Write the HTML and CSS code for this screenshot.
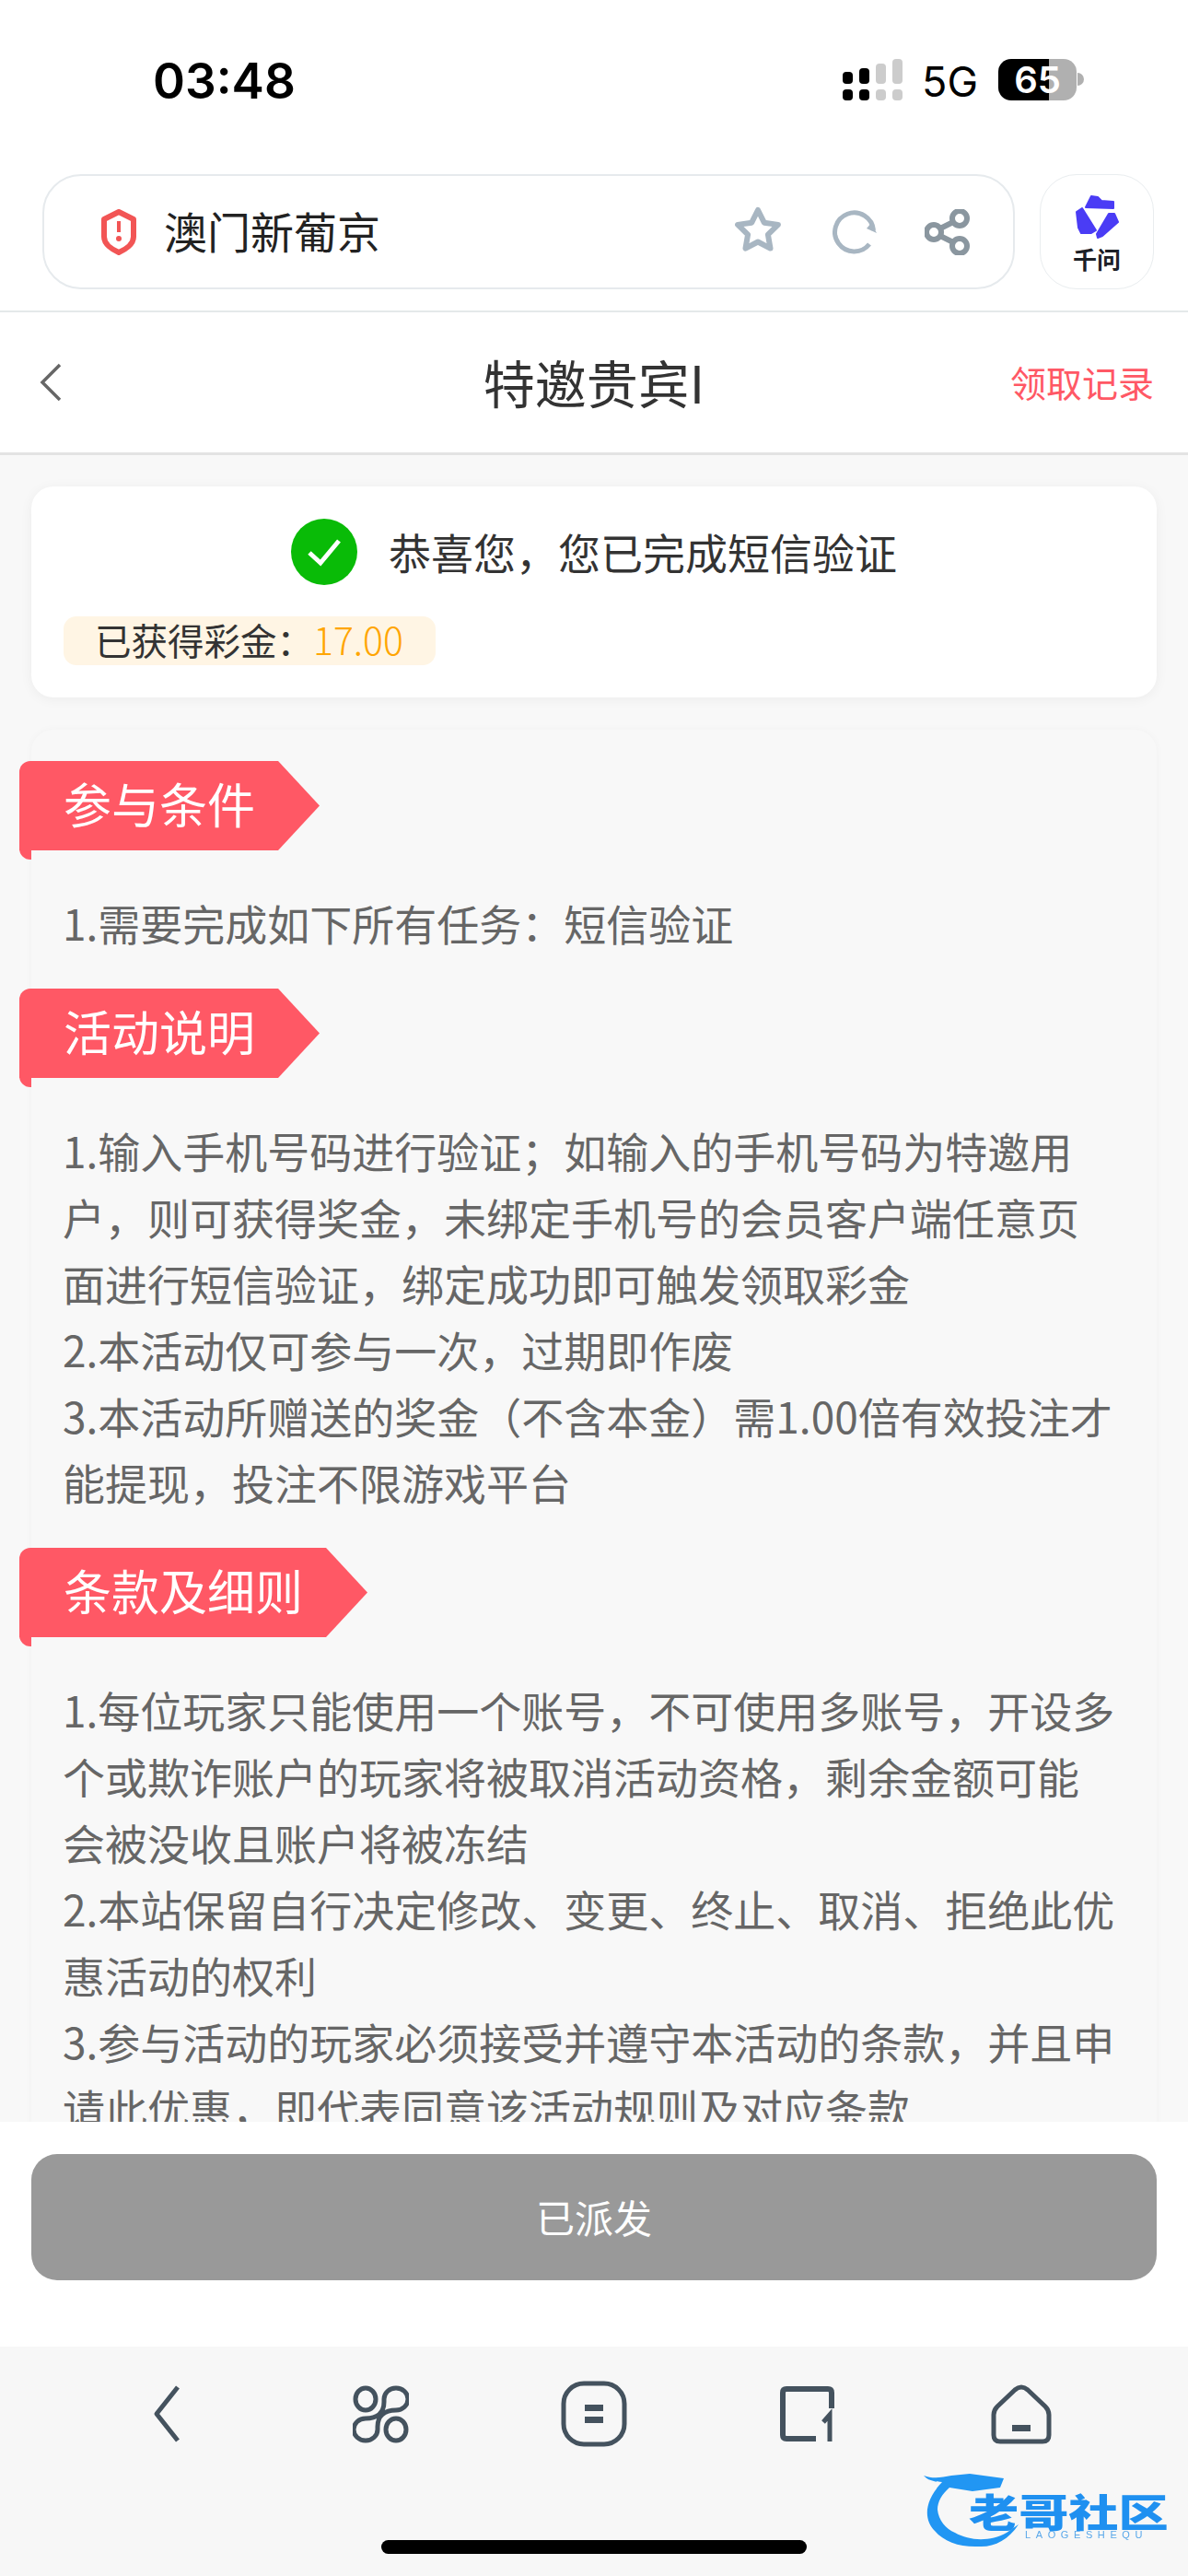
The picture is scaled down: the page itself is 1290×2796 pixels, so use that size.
FILE: index.html
```html
<!DOCTYPE html>
<html lang="zh-CN">
<head>
	<meta charset="utf-8">
	<title>特邀贵宾I</title>
	<link rel="stylesheet" href="styles.css">
</head>
<body>
	<!-- status bar -->
	<div class="status">
		<span class="time">03:48</span>
		<div class="status-right">
			<div class="signal">
				<div class="bar on"><i class="h1"></i><b></b></div>
				<div class="bar on"><i class="h2"></i><b></b></div>
				<div class="bar"><i class="h3"></i><b></b></div>
				<div class="bar"><i class="h4"></i><b></b></div>
			</div>
			<span class="net">5G</span>
			<div class="battery"><span>65</span></div>
			<div class="battery-nub"></div>
		</div>
	</div>

	<!-- browser bar -->
	<div class="browser">
		<div class="address">
			<svg class="shield" width="40" height="50" viewBox="0 0 40 50">
				<path d="M20 3 L36 11 V30 C36 38 27 44 20 47 C13 44 4 38 4 30 V11 Z" fill="none" stroke="#f25555" stroke-width="6" stroke-linejoin="round"/>
				<rect x="18" y="13" width="4" height="12" fill="#f25555"/>
				<circle cx="20" cy="32" r="3" fill="#f25555"/>
			</svg>
			<span class="site">澳门新葡京</span>
			<svg class="star" width="56" height="52" viewBox="0 0 56 52">
				<polygon points="28,4 34.8,17.7 49.9,19.9 38.9,30.6 41.5,45.6 28,38.5 14.5,45.6 17.1,30.6 6.1,19.9 21.2,17.7" fill="none" stroke="#a8b6c2" stroke-width="6" stroke-linejoin="round"/>
			</svg>
			<svg class="reload" width="48" height="48" viewBox="0 0 48 48">
				<path d="M40 37 A21 21 0 1 1 44.5 22" fill="none" stroke="#a8b6c2" stroke-width="5"/>
				<path d="M37 20 L42 14 L48 25 Z" fill="#a8b6c2"/>
			</svg>
			<svg class="share" width="50" height="50" viewBox="0 0 50 50">
				<g fill="none" stroke="#8a969f" stroke-width="6">
					<circle cx="10" cy="25" r="8"/>
					<circle cx="38" cy="10" r="8"/>
					<circle cx="38" cy="40" r="8"/>
					<path d="M17 21 L31 14 M17 29 L31 36"/>
				</g>
			</svg>
		</div>
		<div class="qianwen">
			<svg width="48" height="47" viewBox="0 0 48 47">
				<g fill="#4a3cf5" stroke="#4a3cf5" stroke-width="2" stroke-linejoin="round">
					<polygon points="12,13 18,1 25,2 29,6 42,7 42,14"/>
					<polygon points="2,18 8,14 23,38 18,41 7,41 4,35"/>
					<polygon points="37,20 43,20 47,29 30,44 25,46 24,42"/>
				</g>
			</svg>
			<span>千问</span>
		</div>
	</div>

	<!-- page header -->
	<div class="nav">
		<svg class="nav-back" width="24" height="42" viewBox="0 0 24 42">
			<path d="M22 2 L3 21 L22 40" fill="none" stroke="#666" stroke-width="3.5"/>
		</svg>
		<span class="nav-title">特邀贵宾I</span>
		<span class="nav-link">领取记录</span>
	</div>

	<div class="main">
		<div class="result">
			<div class="result-head">
				<svg width="72" height="72" viewBox="0 0 72 72">
					<circle cx="36" cy="36" r="36" fill="#09bb07"/>
					<path d="M20 37 L32 48 L52 24" fill="none" stroke="#fff" stroke-width="5"/>
				</svg>
				<span>恭喜您，您已完成短信验证</span>
			</div>
			<div class="bonus">已获得彩金：<em>17.00</em></div>
		</div>

		<div class="rules">
			<div class="tag"><span>参与条件</span></div>
			<div class="rule-text">1.需要完成如下所有任务：短信验证</div>

			<div class="tag"><span>活动说明</span></div>
			<div class="rule-text">
				<p>1.输入手机号码进行验证；如输入的手机号码为特邀用户，则可获得奖金，未绑定手机号的会员客户端任意页面进行短信验证，绑定成功即可触发领取彩金</p>
				<p>2.本活动仅可参与一次，过期即作废</p>
				<p>3.本活动所赠送的奖金（不含本金）需1.00倍有效投注才能提现，投注不限游戏平台</p>
			</div>

			<div class="tag"><span>条款及细则</span></div>
			<div class="rule-text">
				<p>1.每位玩家只能使用一个账号，不可使用多账号，开设多个或欺诈账户的玩家将被取消活动资格，剩余金额可能会被没收且账户将被冻结</p>
				<p>2.本站保留自行决定修改、变更、终止、取消、拒绝此优惠活动的权利</p>
				<p>3.参与活动的玩家必须接受并遵守本活动的条款，并且申请此优惠，即代表同意该活动规则及对应条款</p>
			</div>
		</div>
	</div>

	<!-- button panel -->
	<div class="action">
		<div class="action-btn">已派发</div>
	</div>

	<!-- browser toolbar -->
	<div class="toolbar">
		<div class="tools">
			<svg width="30" height="62" viewBox="0 0 30 62">
				<path d="M27 2 L4 31 L27 60" fill="none" stroke="#44525e" stroke-width="5" stroke-linejoin="round"/>
			</svg>
			<svg width="61" height="63" viewBox="0 0 61 63">
				<g fill="none" stroke="#44525e" stroke-width="5">
					<ellipse cx="14" cy="15" rx="11" ry="12"/>
					<ellipse cx="47" cy="48" rx="11" ry="12"/>
					<path d="M14 36 C26 36 34 30 34 18 L34 15 A13 12 0 1 1 47 27 C35 27 27 33 27 45 L27 48 A13 12 0 1 1 14 36 Z"/>
				</g>
			</svg>
			<svg width="72" height="72" viewBox="0 0 72 72">
				<rect x="3" y="3" width="66" height="66" rx="22" fill="none" stroke="#44525e" stroke-width="5"/>
				<rect x="26" y="26" width="20" height="7" fill="#44525e"/>
				<rect x="26" y="39" width="20" height="7" fill="#44525e"/>
			</svg>
			<svg width="60" height="60" viewBox="0 0 60 60">
				<path d="M56 24 V7 Q56 3 52 3 H7 Q3 3 3 7 V53 Q3 57 7 57 H39" fill="none" stroke="#44525e" stroke-width="6"/>
				<path d="M47 39 L54 31 V60" fill="none" stroke="#44525e" stroke-width="5"/>
			</svg>
			<svg width="66" height="65" viewBox="0 0 66 65">
				<path d="M26 6 L7 24 Q3 28 3 33 V55 Q3 62 10 62 H56 Q63 62 63 55 V33 Q63 28 59 24 L40 6 Q33 0 26 6 Z" fill="none" stroke="#44525e" stroke-width="5"/>
				<rect x="23" y="44" width="20" height="7" fill="#44525e"/>
			</svg>
		</div>
		<div class="home-bar"></div>

		<!-- watermark sits over the toolbar -->
		<div class="mark">
			<svg width="110" height="92" viewBox="0 0 110 92">
				<path d="M0 10 C10 14 20 12 30 10 L50 8 L87 13 L83 23 L53 27 L28 23 C20 30 15 38 15 47 C16 58 24 68 34 72 C50 81 72 82 90 72 L103 63 C92 80 76 88 60 87 C40 88 22 82 12 70 C0 58 0 38 20 17 C12 17 4 15 0 10 Z" fill="#2196f3"/>
			</svg>
			<span class="mark-name">老哥社区</span>
			<span class="mark-sub">LAOGESHEQU</span>
		</div>
	</div>
</body>
</html>
```

FILE: styles.css
```css
* {
	box-sizing: border-box;
}

html, body {
	margin: 0;
	height: 2796px;
	overflow: hidden;
}

body {
	display: flex;
	flex-direction: column;
	background: #f8f8f8;
	color: #333;
	font-family: "Noto Sans CJK SC", sans-serif;
}

svg {
	display: block;
	flex: none;
}

/* status bar */
.status {
	flex: none;
	height: 189px;
	background: #fff;
	display: flex;
	justify-content: space-between;
	padding: 56px 113px 0 166px;
	font-family: Inter, sans-serif;
	color: #000;
}

.time {
	font-size: 53px;
	font-weight: 600;
	line-height: 64px;
}

.status-right {
	display: flex;
	align-items: flex-start;
	padding-top: 8px;
}

.signal {
	display: flex;
	gap: 7px;
	margin-right: 21px;
}

.bar {
	display: flex;
	flex-direction: column;
	justify-content: flex-end;
	gap: 6px;
	height: 45px;
	width: 11px;
}

.bar i, .bar b {
	display: block;
	background: #ccc;
	border-radius: 4px;
}

.bar b {
	height: 12px;
}

.bar.on i, .bar.on b {
	background: #000;
}

.bar .h1 { height: 13px; }
.bar .h2 { height: 17px; }
.bar .h3 { height: 22px; }
.bar .h4 { height: 27px; }

.net {
	font-size: 45px;
	font-weight: 400;
	line-height: 50px;
	margin: 0 22px 0 0;
}

.battery {
	width: 85px;
	height: 45px;
	border-radius: 14px;
	background: linear-gradient(90deg, #000 55px, #b0b0b0 55px);
	color: #fff;
	font-size: 40px;
	font-weight: 600;
	line-height: 45px;
	text-align: center;
}

.battery-nub {
	width: 7px;
	height: 14px;
	margin: 15px 0 0 1px;
	background: #b0b0b0;
	border-radius: 0 7px 7px 0;
}

/* browser bar */
.browser {
	flex: none;
	height: 150px;
	background: #fff;
	border-bottom: 2px solid #e4e9ea;
	display: flex;
	gap: 27px;
	padding: 0 37px 0 46px;
}

.address {
	width: 1056px;
	height: 125px;
	border: 2px solid #e6eaed;
	border-radius: 42px;
	display: flex;
	align-items: center;
	padding-left: 61px;
}

.shield {
	margin-right: 29px;
}

.site {
	font-size: 47px;
	line-height: 60px;
	margin-top: -3px;
	color: #222;
	margin-right: auto;
}

.star {
	margin: -4px 53px 0 0;
}

.reload {
	margin-right: 52px;
}

.share {
	margin-right: 46px;
}

.qianwen {
	width: 124px;
	height: 125px;
	border: 1px solid #e9edef;
	border-radius: 40px;
	display: flex;
	flex-direction: column;
	align-items: center;
	padding-top: 22px;
}

.qianwen span {
	font-size: 26px;
	font-weight: 700;
	line-height: 34px;
	color: #1c2026;
	margin-top: 5px;
}

/* page header */
.nav {
	flex: none;
	height: 155px;
	background: #fff;
	border-bottom: 3px solid #e3e3e3;
	position: relative;
	display: flex;
	align-items: center;
	justify-content: space-between;
	padding: 0 37px 0 43px;
}

.nav-title {
	position: absolute;
	left: 0;
	right: 0;
	top: 36px;
	line-height: 78px;
	text-align: center;
	font-size: 56px;
	color: #333;
}

.nav-link {
	font-size: 39px;
	margin-top: -3px;
	color: #ff5865;
}

/* content */
.main {
	flex: 1;
	min-height: 0;
	overflow: hidden;
	padding: 34px 34px 0;
}

.result {
	background: #fff;
	border-radius: 24px;
	box-shadow: 0 2px 14px rgba(0, 0, 0, 0.05);
	padding: 35px;
	margin-bottom: 35px;
}

.result-head {
	display: flex;
	align-items: center;
	justify-content: center;
	gap: 34px;
	height: 72px;
	margin-bottom: 34px;
	font-size: 46px;
	color: #333;
}

.result-head span {
	margin-top: -3px;
}

.bonus {
	width: 404px;
	height: 53px;
	background: #fff5e4;
	border-radius: 14px;
	padding-left: 34px;
	font-size: 39.5px;
	line-height: 48px;
	color: #333;
}

.bonus em {
	font-style: normal;
	font-weight: 300;
	color: #ffa500;
	font-size: 41px;
}

.rules {
	background: #f8f8f8;
	border-radius: 24px 24px 0 0;
	box-shadow: 0 0 10px rgba(0, 0, 0, 0.03);
	padding: 34px 40px 0 34px;
}

.tag {
	position: relative;
	width: fit-content;
	margin-left: -47px;
}

/* folded corner under the ribbon */
.tag::after {
	content: "";
	position: absolute;
	left: 0;
	top: 85px;
	width: 13px;
	height: 22px;
	background: #ff5865;
	border-radius: 0 0 0 12px;
}

.tag span {
	display: block;
	height: 97px;
	padding: 0 70px 0 48px;
	background: #ff5865;
	border-radius: 12px 0 0 0;
	clip-path: polygon(0 0, calc(100% - 45px) 0, 100% 50%, calc(100% - 45px) 100%, 0 100%);
	color: #fff;
	font-size: 52px;
	line-height: 91px;
}

.rule-text {
	margin: 42px 0 36px;
	font-size: 46px;
	line-height: 72px;
	color: #666;
}

.rule-text p {
	margin: 0;
}

/* bottom button */
.action {
	flex: none;
	height: 244px;
	background: #fff;
	padding: 35px 34px 0;
	position: relative;
}

.action-btn {
	height: 137px;
	background: #999;
	border-radius: 28px;
	color: #fff;
	font-size: 42px;
	line-height: 135px;
	text-align: center;
}

/* browser toolbar */
.toolbar {
	flex: none;
	height: 249px;
	background: #f7f7f7;
	position: relative;
	padding-top: 37px;
}

.tools {
	display: grid;
	grid-template-columns: repeat(5, 232px);
	justify-content: center;
	justify-items: center;
	align-items: center;
	height: 72px;
}

.home-bar {
	width: 462px;
	height: 15px;
	margin: 101px auto 0;
	background: #000;
	border-radius: 8px;
}

.mark {
	position: absolute;
	left: 1003px;
	top: 130px;
	width: 270px;
	height: 92px;
	filter: blur(0.7px);
	color: #1f90f0;
}

.mark-name {
	position: absolute;
	left: 49px;
	top: 24px;
	width: 170px;
	font-size: 42px;
	font-weight: 900;
	line-height: 48px;
	white-space: nowrap;
	transform: scaleX(1.29);
	transform-origin: left top;
}

.mark-sub {
	position: absolute;
	left: 110px;
	top: 68px;
	font-family: "Liberation Sans", sans-serif;
	font-size: 11px;
	line-height: 12px;
	letter-spacing: 5.6px;
	white-space: nowrap;
	color: #5aa8ea;
}

.mark svg {
	position: absolute;
	left: 0;
	top: 0;
}
```
